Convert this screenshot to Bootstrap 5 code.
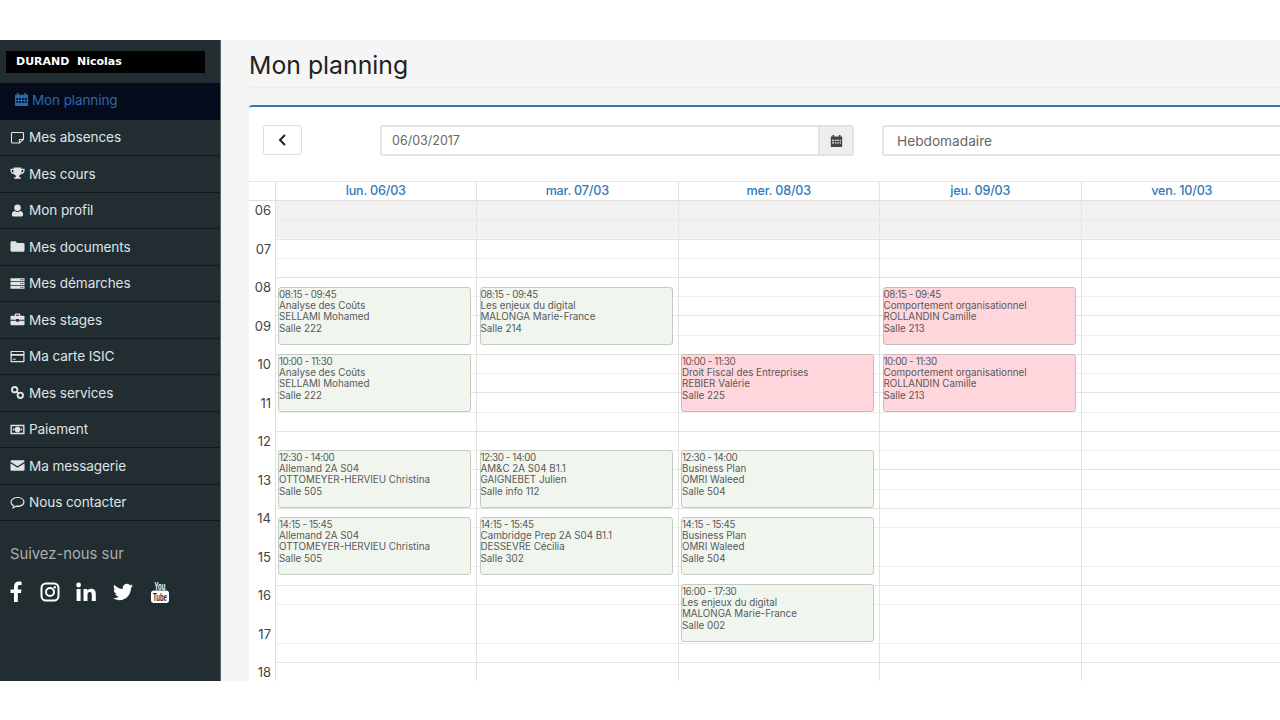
<!DOCTYPE html>
<html lang="fr">
<head>
<meta charset="UTF-8">
<meta name="viewport" content="width=device-width, initial-scale=1.0">
<title>Mon planning</title>
<link href="https://cdn.jsdelivr.net/npm/bootstrap@5.3.3/dist/css/bootstrap.min.css" rel="stylesheet">
<style>
    body { background: #fff; font-family: Inter, "Noto Sans", sans-serif; padding-top: 40px; overflow: hidden; }
    .app-frame { height: 641px; overflow: hidden; }

    /* sidebar */
    .side-col { width: 221px; flex: none; background: #222d32; border-right: 1px solid #59636a; }
    .user-name { margin: 11px 15px 10px 6px; height: 22px; padding-left: 10px; background: #000; color: #fff; font: bold 11px/22px "DejaVu Sans", sans-serif; white-space: pre; }
    .menu-link { height: 36.5px; padding-left: 10px; gap: 4px; border-bottom: 1px solid #12181b; color: #dfe3e5; font-size: 13.6px; letter-spacing: -.1px; text-decoration: none; }
    .menu-link svg { width: 15px; height: 15px; fill: currentColor; flex: none; }
    .menu-link.is-active { background: #050b1a; color: #2a69ad; padding: 0 0 3px 14px; gap: 3px; font-size: 13.5px; border-bottom: 0; }
    .follow-title { margin: 23px 0 0 10px; color: #a9adaf; font-size: 14.8px; line-height: 20px; }
    .social-row { margin: 16px 0 0 10px; gap: 17px; }
    .social-row svg { width: 20px; height: 24px; fill: #fff; flex: none; }
    .social-row .icon-fb { width: 13px; }
    .social-row .icon-in { margin-left: -1px; }

    /* main */
    .main-col { background: #f5f5f5; min-width: 0; padding-left: 28px; }
    .page-title { height: 48px; margin: 0; border-bottom: 1px solid #eee; color: #222; font-size: 24.8px; font-weight: 400; line-height: 50px; }
    .plan-box { width: 1100px; margin-top: 17px; background: #fff; border-top: 2px solid #337ab7; border-radius: 3px 0 0 0; }
    .tool-row { height: 74px; padding: 18px 0 0 14px; }
    .back-btn { width: 39px; height: 30px; flex: none; padding: 0; background: #fff; border: 1px solid #ddd; border-radius: 3px; }
    .date-group { width: 474px; height: 31px; flex: none; margin-left: 78px; }
    .date-group .form-control { height: 31px; padding: 0 10px; border: 2px solid #e2e2e2; border-radius: 3px 0 0 3px; color: #666; font-size: 12.5px; }
    .date-group .input-group-text { width: 35px; padding: 0 9px; background: #eee; border: 2px solid #e2e2e2; border-left-width: 1px; border-radius: 0 3px 3px 0; }
    .period-box { width: 500px; height: 31px; flex: none; margin-left: 28px; padding: 2px 13px 0; border: 2px solid #e2e2e2; border-radius: 3px; color: #666; font-size: 13.7px; line-height: 25px; }

    /* calendar */
    .head-row { height: 20px; border-top: 1px solid #e6e6e6; border-bottom: 1px solid #e0e0e0; }
    .hour-col { width: 26.5px; flex: none; border-right: 1px solid #ddd; }
    .day-head { width: 201.5px; flex: none; border-right: 1px solid #e3e3e3; color: #337ab7; font-size: 12.6px; font-weight: 500; letter-spacing: -.2px; line-height: 18px; text-align: center; }
    .cal-body { height: 482px; }
    .hour-label { height: 38.5px; padding-right: 3.500px; color: #444; font-size: 13px; line-height: 18px; text-align: right; }
    .day-col {
        position: relative; width: 201.5px; flex: none; border-right: 1px solid #e3e3e3;
        background:
            linear-gradient(#f1f1f1 18.25px, #e8e8e8 18.25px, #e8e8e8 19.25px, #f1f1f1 19.25px) 0 0 / 100% 37.5px no-repeat,
            repeating-linear-gradient(#fff 0, #fff 18.25px, #eee 18.25px, #eee 19.25px, #fff 19.25px, #fff 37.5px, #e2e2e2 37.5px, #e2e2e2 38.5px);
    }
    .cal-item { position: absolute; left: 2.500px; width: 193px; height: 58px; padding: 1px 0 0; border: 1px solid #c5cac3; border-radius: 3px; color: #595959; font-size: 9.8px; line-height: 11.2px; white-space: nowrap; }
    .item-time { letter-spacing: -.4px; }
    .item-green { background: #f0f6ee; }
    .item-pink { background: #ffd6dc; border-color: #cbb9bc; }
</style>
</head>
<body>
<div class="app-frame d-flex">
    <aside class="side-col d-flex flex-column">
        <div class="user-name">DURAND  Nicolas</div>
        <nav class="d-flex flex-column">
            <a href="#" class="menu-link is-active d-flex align-items-center">
                <svg viewBox="0 0 16 16"><path d="M3 1h2v2H3zM11 1h2v2h-2zM1 3h14v12H1zM2.500 6.500v2h2v-2zm3 0v2h2v-2zm3 0v2h2v-2zm3 0v2h2v-2zm-9 3v2h2v-2zm3 0v2h2v-2zm3 0v2h2v-2zm3 0v2h2v-2z" fill-rule="evenodd"/></svg>
                Mon planning
            </a>
            <a href="#" class="menu-link d-flex align-items-center">
                <svg viewBox="0 0 16 16"><path fill-rule="evenodd" d="M2.500 2h11A1.500 1.500 0 0 1 15 3.500V10l-4.500 4.500h-8A1.500 1.500 0 0 1 1 13V3.500A1.500 1.500 0 0 1 2.500 2zm0 1.300a.3.3 0 0 0-.3.3V13c0 .2.100.3.3.3H9.500V9.500h4.300V3.600a.3.3 0 0 0-.3-.3zM10.700 10.700v2l2-2z"/></svg>
                Mes absences
            </a>
            <a href="#" class="menu-link d-flex align-items-center">
                <svg viewBox="0 0 16 16"><path fill-rule="evenodd" d="M4 1.500h8V3h3.500v2c0 2-1.700 3.600-4 3.800-.5.700-1.100 1.200-1.700 1.500v1.700H11.500v1.500h-7V12h1.700v-1.700c-.6-.3-1.200-.8-1.700-1.500C2.200 8.600.5 7 .5 5V3H4zM1.800 4.300V5c0 1 .9 2 2.100 2.400-.3-.9-.4-2-.4-3.100zm12.400 0h-1.700c0 1.100-.1 2.200-.4 3.100 1.200-.4 2.100-1.400 2.100-2.400z"/></svg>
                Mes cours
            </a>
            <a href="#" class="menu-link d-flex align-items-center">
                <svg viewBox="0 0 16 16"><circle cx="8" cy="5" r="3.500"/><path d="M5 8.500c.8.700 1.800 1 3 1s2.200-.3 3-1c2 .2 3 1.700 3 4 0 1.200-.8 2-2 2H4c-1.200 0-2-.8-2-2 0-2.300 1-3.800 3-4z"/></svg>
                Mon profil
            </a>
            <a href="#" class="menu-link d-flex align-items-center">
                <svg viewBox="0 0 16 16"><path d="M2 2.500h4l1.500 1.800H14A1.500 1.500 0 0 1 15.500 5.800V12A1.500 1.500 0 0 1 14 13.500H2A1.500 1.500 0 0 1 .5 12V4A1.500 1.500 0 0 1 2 2.500z"/></svg>
                Mes documents
            </a>
            <a href="#" class="menu-link d-flex align-items-center">
                <svg viewBox="0 0 16 16"><path fill-rule="evenodd" d="M.5 2.500h15v3H.5zm0 4h15v3H.5zm0 4h15v3H.5zM11 3.400v1.200h1.200V3.400zm2 0v1.200h1.200V3.400zm-2 4v1.200h1.200V7.400zm2 0v1.200h1.200V7.400zm-2 4v1.200h1.200v-1.200zm2 0v1.200h1.200v-1.200z"/></svg>
                Mes démarches
            </a>
            <a href="#" class="menu-link d-flex align-items-center">
                <svg viewBox="0 0 16 16"><path fill-rule="evenodd" d="M5 4V2.700C5 2 5.500 1.500 6.200 1.500h3.600c.7 0 1.200.5 1.200 1.200V4h3.500c.6 0 1 .4 1 1v3.300H9.500V7.500h-3v.8H.5V5c0-.6.400-1 1-1zm1.300-1.200V4h3.400V2.800zM.5 9.300h6v1.200h3V9.300h6V13c0 .6-.4 1-1 1h-13c-.6 0-1-.4-1-1z"/></svg>
                Mes stages
            </a>
            <a href="#" class="menu-link d-flex align-items-center">
                <svg viewBox="0 0 16 16"><path fill-rule="evenodd" d="M1.500 2h13c.6 0 1 .4 1 1v10c0 .6-.4 1-1 1h-13c-.6 0-1-.4-1-1V3c0-.6.400-1 1-1zM1.800 3.300v1.900h12.400V3.300zm0 4v5.400h12.400V7.300zM3 10.500h3v1H3z"/></svg>
                Ma carte ISIC
            </a>
            <a href="#" class="menu-link d-flex align-items-center">
                <svg viewBox="0 0 16 16"><circle cx="5" cy="5" r="2.900" fill="none" stroke="currentColor" stroke-width="2"/><circle cx="11" cy="11" r="2.900" fill="none" stroke="currentColor" stroke-width="2"/><path d="M6 7.200 7.200 6 10 8.800 8.800 10z"/></svg>
                Mes services
            </a>
            <a href="#" class="menu-link d-flex align-items-center">
                <svg viewBox="0 0 16 16"><path fill-rule="evenodd" d="M.5 3h15v10H.5zM2 4.500V11.500h12V4.500zM8 5a3 3 0 1 1 0 6 3 3 0 0 1 0-6zM3 7h1.500v2H3zm8.500 0H13v2h-1.500z"/></svg>
                Paiement
            </a>
            <a href="#" class="menu-link d-flex align-items-center">
                <svg viewBox="0 0 16 16"><path d="M1.500 2.500h13c.6 0 1 .4 1 1v.6L8 8.800.5 4.100v-.6c0-.6.400-1 1-1zM.5 5.700 8 10.400l7.500-4.700V12.500c0 .6-.4 1-1 1h-13c-.6 0-1-.4-1-1z"/></svg>
                Ma messagerie
            </a>
            <a href="#" class="menu-link d-flex align-items-center">
                <svg viewBox="0 0 16 16"><path fill-rule="evenodd" d="M8 2c4.100 0 7.500 2.400 7.500 5.500S12.100 13 8 13c-.6 0-1.100 0-1.700-.1-1 .9-2.500 1.600-4.300 1.800.7-.8 1.200-1.700 1.300-2.700C1.500 11 .5 9.300.5 7.500.5 4.400 3.900 2 8 2zm0 1.200c-3.400 0-6.200 1.900-6.200 4.300 0 1.500 1 2.800 2.900 3.700-.1.500-.2.900-.4 1.300.8-.3 1.500-.8 2-1.400.5.100 1.100.1 1.700.1 3.400 0 6.200-1.700 6.200-4 0-2.400-2.800-4-6.200-4z"/></svg>
                Nous contacter
            </a>
        </nav>
        <div class="follow-title">Suivez-nous sur</div>
        <div class="social-row d-flex align-items-center">
            <svg class="icon-fb" viewBox="0 0 13 24"><path d="M4 22v-9H.5V9.500H4V6.500C4 3.300 6 1.500 8.800 1.500c1.300 0 2.500.1 2.800.2v3.300H9.700C8.200 5 7.800 5.800 7.800 6.900v2.600h3.700l-.5 3.500H7.800v9z"/></svg>
            <svg viewBox="0 0 20 24"><rect x="1.500" y="3.500" width="17" height="17" rx="4.500" fill="none" stroke="#fff" stroke-width="2"/><circle cx="10" cy="12" r="4" fill="none" stroke="#fff" stroke-width="2"/><circle cx="14.800" cy="7.200" r="1.200"/></svg>
            <svg class="icon-in" viewBox="0 0 20 24"><circle cx="2.600" cy="5" r="2.400"/><path d="M.6 9h4v12h-4zM7.500 9h3.800v1.700c.7-1.200 2.100-2 3.800-2 3.500 0 4.700 2.100 4.700 5.300v7h-4v-6.300c0-1.600-.4-2.700-1.900-2.700s-2.400 1.100-2.400 2.800V21h-4z"/></svg>
            <svg viewBox="0 0 16 19"><path d="M5.026 16c6.038 0 9.341-5.003 9.341-9.334 0-.14 0-.282-.006-.422A6.685 6.685 0 0 0 16 4.542a6.658 6.658 0 0 1-1.889.518 3.301 3.301 0 0 0 1.447-1.817 6.533 6.533 0 0 1-2.087.793A3.286 3.286 0 0 0 7.875 7.030a9.325 9.325 0 0 1-6.767-3.429 3.289 3.289 0 0 0 1.018 4.382A3.323 3.323 0 0 1 .64 7.575v.045a3.288 3.288 0 0 0 2.632 3.218 3.203 3.203 0 0 1-.865.115 3.23 3.23 0 0 1-.614-.057 3.283 3.283 0 0 0 3.067 2.277A6.588 6.588 0 0 1 .78 14.580a6.32 6.32 0 0 1-.78-.045A9.344 9.344 0 0 0 5.026 16z"/></svg>
            <svg viewBox="0 0 20 24"><text transform="translate(10 9.500) scale(.6 1)" text-anchor="middle" font-family="Liberation Sans, sans-serif" font-size="10" font-weight="700" fill="#fff">You</text><rect x="1" y="10.500" width="18" height="12.500" rx="3"/><text transform="translate(10 20.500) scale(.6 1)" text-anchor="middle" font-family="Liberation Sans, sans-serif" font-size="10" font-weight="700" fill="#222d32">Tube</text></svg>
        </div>
    </aside>

    <main class="main-col flex-grow-1 overflow-hidden">
        <h1 class="page-title">Mon planning</h1>
        <div class="plan-box">
            <div class="tool-row d-flex align-items-start">
                <button type="button" class="back-btn d-flex align-items-center justify-content-center">
                    <svg width="9" height="12" viewBox="0 0 9 12"><path d="M7 1 2 6l5 5" fill="none" stroke="#222" stroke-width="2"/></svg>
                </button>
                <div class="date-group input-group flex-nowrap">
                    <input class="form-control" type="text" value="06/03/2017">
                    <span class="input-group-text justify-content-center">
                        <svg width="13" height="14" viewBox="0 0 16 16"><path fill="#444" fill-rule="evenodd" d="M3 .5h2v2H3zM11 .5h2v2h-2zM1 2.500h14V15.500H1zM2.500 6.500v1.500h2.500V6.500zm3.500 0v1.500h2V6.500zm3 0v1.500h2V6.500zm3 0v1.500h1.500V6.500zm-9.500 3v1.500h2.500V9.500zm3.500 0v1.500h2V9.500zm3 0v1.500h2V9.500zm3 0v1.500h1.500V9.500z"/></svg>
                    </span>
                </div>
                <div class="period-box">Hebdomadaire</div>
            </div>

            <div class="head-row d-flex">
                <div class="hour-col"></div>
                <div class="day-head">lun. 06/03</div>
                <div class="day-head">mar. 07/03</div>
                <div class="day-head">mer. 08/03</div>
                <div class="day-head">jeu. 09/03</div>
                <div class="day-head">ven. 10/03</div>
            </div>

            <div class="cal-body d-flex">
                <div class="hour-col">
                    <div class="hour-label">06</div>
                    <div class="hour-label">07</div>
                    <div class="hour-label">08</div>
                    <div class="hour-label">09</div>
                    <div class="hour-label">10</div>
                    <div class="hour-label">11</div>
                    <div class="hour-label">12</div>
                    <div class="hour-label">13</div>
                    <div class="hour-label">14</div>
                    <div class="hour-label">15</div>
                    <div class="hour-label">16</div>
                    <div class="hour-label">17</div>
                    <div class="hour-label">18</div>
                </div>
                <div class="day-col">
                    <div class="cal-item item-green" style="top:86px"><span class="item-time">08:15 - 09:45</span><br>Analyse des Coûts<br>SELLAMI Mohamed<br>Salle 222</div>
                    <div class="cal-item item-green" style="top:153px"><span class="item-time">10:00 - 11:30</span><br>Analyse des Coûts<br>SELLAMI Mohamed<br>Salle 222</div>
                    <div class="cal-item item-green" style="top:249px"><span class="item-time">12:30 - 14:00</span><br>Allemand 2A S04<br>OTTOMEYER-HERVIEU Christina<br>Salle 505</div>
                    <div class="cal-item item-green" style="top:316px"><span class="item-time">14:15 - 15:45</span><br>Allemand 2A S04<br>OTTOMEYER-HERVIEU Christina<br>Salle 505</div>
                </div>
                <div class="day-col">
                    <div class="cal-item item-green" style="top:86px"><span class="item-time">08:15 - 09:45</span><br>Les enjeux du digital<br>MALONGA Marie-France<br>Salle 214</div>
                    <div class="cal-item item-green" style="top:249px"><span class="item-time">12:30 - 14:00</span><br>AM&amp;C 2A S04 B1.1<br>GAIGNEBET Julien<br>Salle info 112</div>
                    <div class="cal-item item-green" style="top:316px"><span class="item-time">14:15 - 15:45</span><br>Cambridge Prep 2A S04 B1.1<br>DESSEVRE Cécilia<br>Salle 302</div>
                </div>
                <div class="day-col">
                    <div class="cal-item item-pink" style="top:153px"><span class="item-time">10:00 - 11:30</span><br>Droit Fiscal des Entreprises<br>REBIER Valérie<br>Salle 225</div>
                    <div class="cal-item item-green" style="top:249px"><span class="item-time">12:30 - 14:00</span><br>Business Plan<br>OMRI Waleed<br>Salle 504</div>
                    <div class="cal-item item-green" style="top:316px"><span class="item-time">14:15 - 15:45</span><br>Business Plan<br>OMRI Waleed<br>Salle 504</div>
                    <div class="cal-item item-green" style="top:383px"><span class="item-time">16:00 - 17:30</span><br>Les enjeux du digital<br>MALONGA Marie-France<br>Salle 002</div>
                </div>
                <div class="day-col">
                    <div class="cal-item item-pink" style="top:86px"><span class="item-time">08:15 - 09:45</span><br>Comportement organisationnel<br>ROLLANDIN Camille<br>Salle 213</div>
                    <div class="cal-item item-pink" style="top:153px"><span class="item-time">10:00 - 11:30</span><br>Comportement organisationnel<br>ROLLANDIN Camille<br>Salle 213</div>
                </div>
                <div class="day-col"></div>
            </div>
        </div>
    </main>
</div>
<script src="https://cdn.jsdelivr.net/npm/bootstrap@5.3.3/dist/js/bootstrap.bundle.min.js"></script>
</body>
</html>
